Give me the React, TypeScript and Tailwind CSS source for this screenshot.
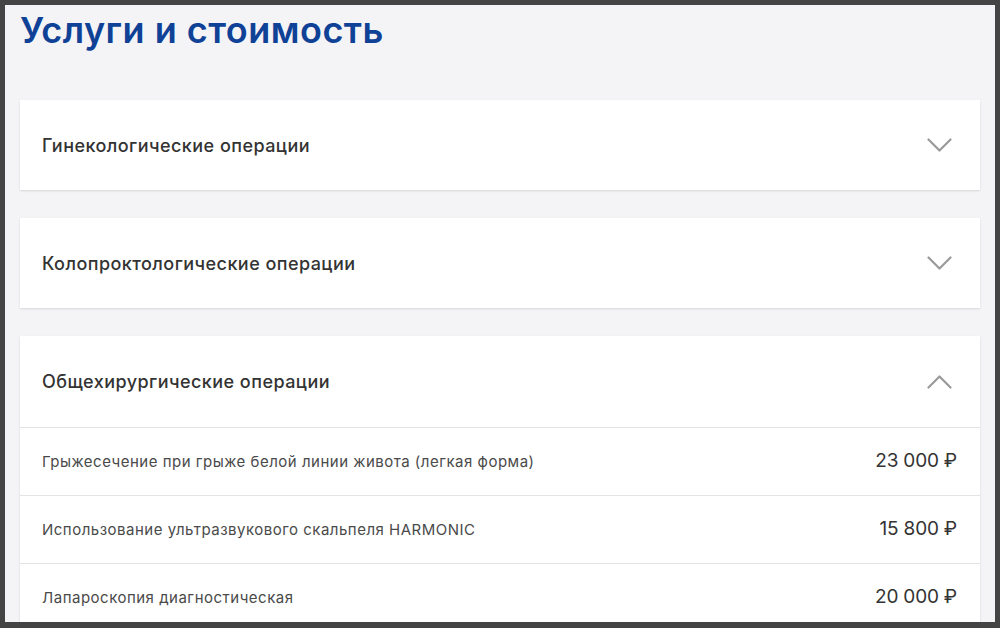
import React from "react";

function Chevron({ up }: { up?: boolean }) {
  return (
    <svg width="25" height="15" viewBox="0 0 25 15" fill="none" className="shrink-0">
      <path
        d={up ? "M1.5 13.5 L12.5 2.5 L23.5 13.5" : "M1.5 1.5 L12.5 12.5 L23.5 1.5"}
        stroke="#9a9a9a"
        strokeWidth="2.2"
        strokeLinecap="round"
        strokeLinejoin="round"
      />
    </svg>
  );
}

const rows = [
  { name: "Грыжесечение при грыже белой линии живота (легкая форма)", price: "23 000 ₽" },
  { name: "Использование ультразвукового скальпеля HARMONIC", price: "15 800 ₽" },
  { name: "Лапароскопия диагностическая", price: "20 000 ₽" },
];

export default function App() {
  return (
    <div
      className="w-[1000px] h-[628px] bg-[#444444] pt-[5px] pl-[5px] pr-[5px] pb-[6px] overflow-hidden"
      style={{ fontFamily: "Inter, 'Open Sans', sans-serif" }}
    >
      <div className="h-full bg-[#f4f4f6] px-[15px] overflow-hidden">
        <h1 className="pt-[3px] text-[36px] leading-[44px] font-semibold text-[#0f4296] tracking-[0.5px]">
          Услуги и стоимость
        </h1>
        <div className="mt-[48px] flex flex-col gap-[28px]">
          <div className="bg-white shadow-[0_1px_2px_rgba(0,0,0,0.12)] h-[90px] flex items-center justify-between pl-[22px] pr-[28px]">
            <span className="text-[18px] font-medium text-[#333333] tracking-[0.45px]">Гинекологические операции</span>
            <Chevron />
          </div>
          <div className="bg-white shadow-[0_1px_2px_rgba(0,0,0,0.12)] h-[90px] flex items-center justify-between pl-[22px] pr-[28px]">
            <span className="text-[18px] font-medium text-[#333333] tracking-[0.45px]">Колопроктологические операции</span>
            <Chevron />
          </div>
          <div className="bg-white shadow-[0_1px_2px_rgba(0,0,0,0.12)]">
            <div className="h-[91px] flex items-center justify-between pl-[22px] pr-[28px]">
              <span className="text-[18px] font-medium text-[#333333] tracking-[0.45px]">Общехирургические операции</span>
              <Chevron up />
            </div>
            {rows.map((r) => (
              <div
                key={r.name}
                className="h-[68px] border-t border-[#e4e4e6] flex items-center justify-between pl-[22px] pr-[23px]"
              >
                <span className="text-[15px] text-[#4a4a4a] tracking-[0.5px] pt-[1px]">{r.name}</span>
                <span className="text-[19px] text-[#333333] tracking-[-0.2px]">{r.price}</span>
              </div>
            ))}
          </div>
        </div>
      </div>
    </div>
  );
}
